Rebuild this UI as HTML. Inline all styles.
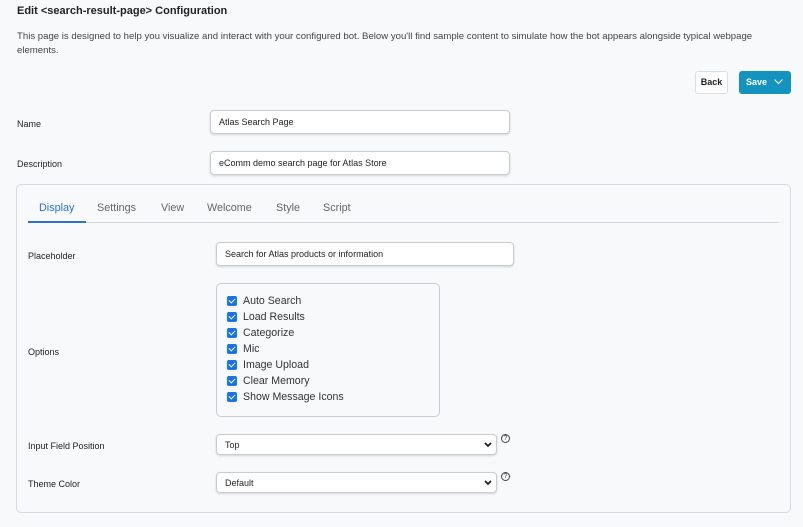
<!DOCTYPE html>
<html><head><style>
*{box-sizing:border-box;margin:0;padding:0}
body{width:803px;height:527px;background:#f8f9fb;font-family:"Liberation Sans",Arial,sans-serif;color:#222;position:relative;overflow:hidden;font-size:9px}
.a{position:absolute}
.inp{position:absolute;background:#fff;border:1px solid #c9ccd1;border-radius:4px;box-shadow:0 1px 2px rgba(0,0,0,.15);padding-left:8px;display:flex;align-items:center;font-size:9px;color:#222}
.lbl{position:absolute;font-size:9px;color:#222}
.cb{position:absolute;left:227px;font-size:10.6px;color:#333;display:flex;align-items:center}
.cb i{display:inline-block;width:10px;height:10px;background:#1a73e8;border-radius:2px;margin-right:6px;position:relative}
.cb i:after{content:"";position:absolute;left:3px;top:1px;width:3px;height:5px;border:solid #fff;border-width:0 1.5px 1.5px 0;transform:rotate(45deg)}
.q{position:absolute;width:9px;height:9px;border:1px solid #444;border-radius:50%;font-size:7px;line-height:7px;text-align:center;color:#444}
.t{position:absolute;top:202px;font-size:10.8px;color:#666}
</style></head><body>
<div class="a" style="left:17px;top:5px;font-size:11px;font-weight:bold">Edit &lt;search-result-page&gt; Configuration</div>
<div class="a" style="left:17px;top:30px;width:770px;font-size:9.6px;line-height:14px;color:#444">This page is designed to help you visualize and interact with your configured bot. Below you'll find sample content to simulate how the bot appears alongside typical webpage elements.</div>
<div class="a" style="left:695px;top:71px;width:33px;height:23px;background:#fff;border:1px solid #ddd;border-radius:3px;font-size:9px;font-weight:bold;text-align:center;line-height:21px">Back</div>
<div class="a" style="left:739px;top:71px;width:52px;height:23px;background:#1493bf;border-radius:3px;color:#fff;font-size:9px;font-weight:bold;line-height:23px;padding-left:7px">Save
<svg style="position:absolute;left:35px;top:8px" width="9" height="6" viewBox="0 0 9 6"><path d="M0.5 0.5L4.5 4.5L8.5 0.5" stroke="#fff" fill="none" stroke-width="1"/></svg></div>
<div class="lbl" style="left:17px;top:119px">Name</div>
<div class="inp" style="left:210px;top:110px;width:300px;height:24px">Atlas Search Page</div>
<div class="lbl" style="left:17px;top:159px">Description</div>
<div class="inp" style="left:210px;top:151px;width:300px;height:24px">eComm demo search page for Atlas Store</div>
<div class="a" style="left:16px;top:184px;width:775px;height:329px;border:1px solid #d6d9de;border-radius:5px;background:#f8f9fb"></div>
<div class="a" style="left:28px;top:222px;width:751px;height:1px;background:#d6d9de"></div>
<div class="a" style="left:28px;top:221px;width:58px;height:2px;background:#2d6fd6"></div>
<div class="t" style="left:39px;color:#2d6fd6">Display</div>
<div class="t" style="left:97px">Settings</div>
<div class="t" style="left:161px">View</div>
<div class="t" style="left:207px">Welcome</div>
<div class="t" style="left:276px">Style</div>
<div class="t" style="left:323px">Script</div>
<div class="lbl" style="left:28px;top:251px">Placeholder</div>
<div class="inp" style="left:216px;top:242px;width:298px;height:24px">Search for Atlas products or information</div>
<div class="lbl" style="left:28px;top:347px">Options</div>
<div class="a" style="left:216px;top:283px;width:224px;height:134px;border:1px solid #c9ccd1;border-radius:5px"></div>
<div class="cb" style="top:295px"><i></i>Auto Search</div>
<div class="cb" style="top:311px"><i></i>Load Results</div>
<div class="cb" style="top:327px"><i></i>Categorize</div>
<div class="cb" style="top:343px"><i></i>Mic</div>
<div class="cb" style="top:359px"><i></i>Image Upload</div>
<div class="cb" style="top:375px"><i></i>Clear Memory</div>
<div class="cb" style="top:391px"><i></i>Show Message Icons</div>
<div class="lbl" style="left:28px;top:441px">Input Field Position</div>
<div class="inp" style="left:216px;top:434px;width:281px;height:21px">Top<svg style="position:absolute;right:4px;top:7px" width="8" height="6" viewBox="0 0 8 6"><path d="M1 1L4 4L7 1" stroke="#222" fill="none" stroke-width="1.8"/></svg></div>
<div class="q" style="left:501px;top:434px">?</div>
<div class="lbl" style="left:28px;top:479px">Theme Color</div>
<div class="inp" style="left:216px;top:472px;width:281px;height:21px">Default<svg style="position:absolute;right:4px;top:7px" width="8" height="6" viewBox="0 0 8 6"><path d="M1 1L4 4L7 1" stroke="#222" fill="none" stroke-width="1.8"/></svg></div>
<div class="q" style="left:501px;top:472px">?</div>
</body></html>
